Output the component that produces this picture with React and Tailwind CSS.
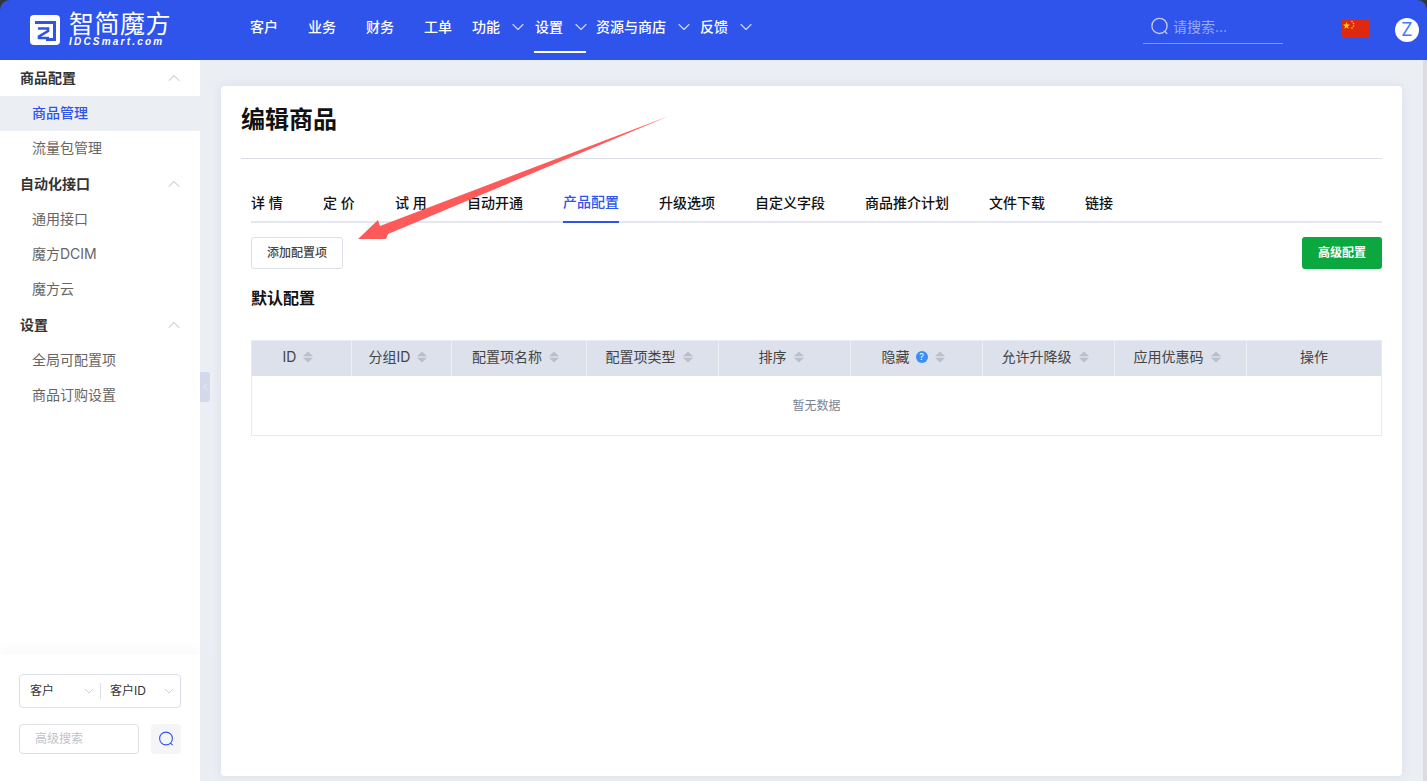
import { ChevronDown, ChevronUp, ChevronLeft } from "lucide-react";

const sideGroups = [
  { title: "商品配置", items: ["商品管理", "流量包管理"] },
  { title: "自动化接口", items: ["通用接口", "魔方DCIM", "魔方云"] },
  { title: "设置", items: ["全局可配置项", "商品订购设置"] },
];

const tabs = ["详 情", "定 价", "试 用", "自动开通", "产品配置", "升级选项", "自定义字段", "商品推介计划", "文件下载", "链接"];

const columns = [
  { name: "ID", sort: true },
  { name: "分组ID", sort: true },
  { name: "配置项名称", sort: true },
  { name: "配置项类型", sort: true },
  { name: "排序", sort: true },
  { name: "隐藏", sort: true, help: true },
  { name: "允许升降级", sort: true },
  { name: "应用优惠码", sort: true },
  { name: "操作" },
];

function Logo() {
  return (
    <div className="flex items-center gap-[9px] ml-[30px] w-[220px] shrink-0">
      <svg width="30" height="30" viewBox="0 0 30 30" fill="none">
        <rect width="30" height="30" rx="4" fill="#fff" />
        <path d="M5 7.5H24.5V24.5H16" stroke="#2f54eb" strokeWidth="3" />
        <path d="M8 13.5H18V16L9 21.5V23H19" stroke="#2f54eb" strokeWidth="2.6" />
      </svg>
      <div className="text-white">
        <div className="text-[25px] leading-[24px] tracking-[0.5px] whitespace-nowrap">智简魔方</div>
        <div className="text-[10px] leading-[12px] font-bold italic tracking-[2.2px] whitespace-nowrap font-['Liberation_Sans',sans-serif]">IDCSmart.com</div>
      </div>
    </div>
  );
}

function NavItem({ label, arrow, active, className }) {
  return (
    <div className={`relative flex items-center h-full pb-[6px] text-white text-sm font-medium whitespace-nowrap ${className}`}>
      {label}
      {arrow && <ChevronDown size={20} strokeWidth={1.4} className="ml-[8px] text-[#c8d2fa]" />}
      {active && <div className="absolute left-[-1px] right-[5px] bottom-[7px] h-[2px] bg-white" />}
    </div>
  );
}

function Flag() {
  return (
    <svg width="28" height="19" viewBox="0 0 28 19">
      <rect width="28" height="19" fill="#de2910" />
      <polygon points="4.5,3 5.4,5.6 8,5.6 5.9,7.2 6.7,9.8 4.5,8.2 2.3,9.8 3.1,7.2 1,5.6 3.6,5.6" fill="#ffde00" />
      <circle cx="10" cy="2.5" r="0.8" fill="#ffde00" />
      <circle cx="11.5" cy="4.5" r="0.8" fill="#ffde00" />
      <circle cx="11.5" cy="7" r="0.8" fill="#ffde00" />
      <circle cx="10" cy="9" r="0.8" fill="#ffde00" />
    </svg>
  );
}

function SortIcon() {
  return (
    <svg width="10" height="12" viewBox="0 0 10 12" className="ml-[7px] mr-[7px]">
      <path d="M5 .5 10 5.2H0Z" fill="#b9bfcb" />
      <path d="M5 11.5 0 6.8H10Z" fill="#b9bfcb" />
    </svg>
  );
}

function SearchIcon({ size, color, width }) {
  return (
    <svg width={size} height={size} viewBox="0 0 16 16" fill="none" stroke={color} strokeWidth={width}>
      <circle cx="8" cy="7.5" r="6.4" />
      <path d="m12.5 12 2 2.2" />
    </svg>
  );
}

function Sidebar() {
  return (
    <aside className="relative w-[200px] shrink-0 bg-white flex flex-col">
      <div className="flex-1">
        {sideGroups.map((g) => (
          <div key={g.title}>
            <div className="h-[36px] pl-[20px] pr-[16px] flex items-center justify-between text-sm font-bold text-[#333]">
              {g.title}
              <ChevronUp size={20} strokeWidth={1} className="text-[#a5a9b2]" />
            </div>
            {g.items.map((item) => (
              <div
                key={item}
                className={
                  item === "商品管理"
                    ? "h-[35px] pl-[32px] pb-[2px] flex items-center text-sm font-medium text-[#2f54eb] bg-[#ebeef3]"
                    : "h-[35px] pl-[32px] pb-[2px] flex items-center text-sm text-[#666]"
                }
              >
                {item}
              </div>
            ))}
          </div>
        ))}
      </div>

      <div className="h-[127px] px-[19px] pt-[20px] shadow-[0_-6px_10px_rgba(235,238,245,0.35)]">
        <div className="h-[34px] w-[162px] border border-[#dcdfe8] rounded-[4px] flex items-center text-xs text-[#333]">
          <div className="w-[80px] pl-[10px] pr-[3px] flex items-center justify-between">
            客户
            <ChevronDown size={16} strokeWidth={1} className="text-[#b4b8c2]" />
          </div>
          <div className="w-[1px] h-[16px] bg-[#dcdfe8]" />
          <div className="flex-1 pl-[9px] pr-[3px] flex items-center justify-between">
            客户ID
            <ChevronDown size={16} strokeWidth={1} className="text-[#b4b8c2]" />
          </div>
        </div>
        <div className="flex items-center mt-[16px]">
          <div className="w-[120px] h-[30px] border border-[#dcdfe8] rounded-[4px] pl-[15px] flex items-center text-xs text-[#bfc2c9]">
            高级搜索
          </div>
          <div className="w-[30px] h-[30px] ml-[12px] rounded-[4px] bg-[#f5f5f8] flex items-center justify-center">
            <SearchIcon size={16} color="#2f54eb" width={1.1} />
          </div>
        </div>
      </div>

      <div className="absolute left-[200px] top-[312px] w-[10px] h-[30px] bg-[#d3d9ea] rounded-r-[3px] flex items-center justify-center">
        <ChevronLeft size={12} strokeWidth={1.25} className="text-white" />
      </div>
    </aside>
  );
}

function Arrow() {
  return (
    <svg width="320" height="130" viewBox="0 0 320 130" className="absolute left-[130px] top-[30px] pointer-events-none">
      <polygon points="318,0 29,110 27,104 7,123 35,123 37,118" fill="#ff5a5a" />
    </svg>
  );
}

export default function App() {
  return (
    <div className="w-[1427px] h-[781px] overflow-hidden bg-[#33363b] flex flex-col font-[Inter,'Noto_Sans_CJK_SC',sans-serif]">
      {/* HEADER */}
      <header className="h-[60px] shrink-0 bg-[#2f54eb] rounded-t-[10px] flex items-center">
        <Logo />
        <NavItem label="客户" className="mr-[30px]" />
        <NavItem label="业务" className="mr-[30px]" />
        <NavItem label="财务" className="mr-[30px]" />
        <NavItem label="工单" className="mr-[20px]" />
        <NavItem label="功能" arrow className="mr-[7px]" />
        <NavItem label="设置" arrow active className="mr-[5px]" />
        <NavItem label="资源与商店" arrow className="mr-[6px]" />
        <NavItem label="反馈" arrow />

        <div className="ml-auto self-start mt-[17px] w-[140px] h-[27px] border-b border-[#8198f2] pl-[7px] flex items-start text-sm text-[#98aaf5]">
          <SearchIcon size={19} color="#c4ccdf" width={1.1} />
          <span className="ml-[4px]">请搜索...</span>
        </div>
        <div className="ml-[59px] mt-[-4px]">
          <Flag />
        </div>
        <div className="ml-[25px] mr-[8px] w-[24px] h-[24px] rounded-full bg-white text-[#3f7df0] flex items-center justify-center text-lg">
          Z
        </div>
      </header>

      <div className="flex-1 flex min-h-0">
        <Sidebar />

        {/* MAIN */}
        <main className="flex-1 bg-[#ebeef3] pl-[21px] pr-[21px] pt-[26px] pb-[5px] border-r-[4px] border-[#dcdde1]">
          <div className="relative h-full bg-white rounded-[4px] shadow-[0_0_10px_rgba(200,205,220,0.45)] px-[20px]">
            <Arrow />
            <h1 className="h-[72px] pb-[4px] flex items-center text-2xl font-bold text-[#111]">编辑商品</h1>
            <div className="h-[1px] bg-[#dcdfe8]" />

            <div className="pl-[10px]">
              <div className="mt-[26px] h-[38px] flex gap-[40px] border-b-2 border-[#e4e7f0]">
                {tabs.map((t) => (
                  <div
                    key={t}
                    className={
                      t === "产品配置"
                        ? "h-[38px] pb-[2px] flex items-center text-sm font-medium whitespace-pre text-[#2f54eb] border-b-2 border-[#2f54eb]"
                        : "h-[38px] pb-[2px] min-w-[32px] flex items-center text-sm font-medium whitespace-pre text-[#111]"
                    }
                  >
                    {t}
                  </div>
                ))}
              </div>

              <div className="mt-[14px] flex justify-between">
                <button className="w-[92px] h-[32px] border border-[#dcdfe8] rounded-[3px] bg-white text-xs font-medium text-[#444]">
                  添加配置项
                </button>
                <button className="w-[80px] h-[32px] rounded-[3px] bg-[#0aa83f] text-xs font-bold text-white">
                  高级配置
                </button>
              </div>

              <h2 className="mt-[17px] h-[24px] flex items-center text-base font-bold text-[#111]">默认配置</h2>

              <div className="mt-[30px] border border-[#e8eaf1]">
                <div className="grid grid-cols-[100px_100px_135px_132px_132px_132px_132px_132px_1fr] h-[35px] bg-[#dce1ec]">
                  {columns.map((c) => (
                    <div
                      key={c.name}
                      className="flex items-center justify-center pb-[3px] text-sm text-[#444] border-r border-[#eef0f6] last:border-r-0"
                    >
                      {c.name}
                      {c.help && (
                        <span className="ml-[6px] w-[12px] h-[12px] rounded-full bg-[#3a8ef6] text-white text-[9px] leading-[12px] text-center">
                          ?
                        </span>
                      )}
                      {c.sort && <SortIcon />}
                    </div>
                  ))}
                </div>
                <div className="h-[59px] pt-[1px] flex items-center justify-center text-xs text-[#7b8494]">暂无数据</div>
              </div>
            </div>
          </div>
        </main>
      </div>
    </div>
  );
}
